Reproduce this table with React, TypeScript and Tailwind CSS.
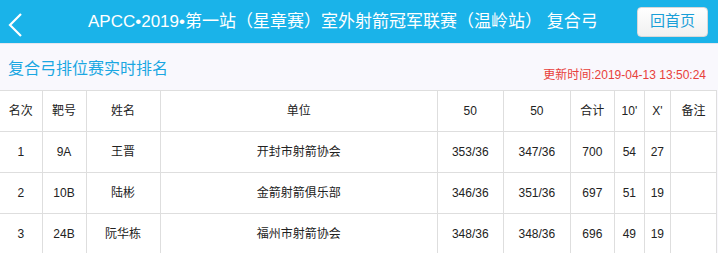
const ROWS = [
  { rank: "1", target: "9A", name: "王晋", unit: "开封市射箭协会", a: "353/36", b: "347/36", total: "700", tens: "54", xs: "27" },
  { rank: "2", target: "10B", name: "陆彬", unit: "金箭射箭俱乐部", a: "346/36", b: "351/36", total: "697", tens: "51", xs: "19" },
  { rank: "3", target: "24B", name: "阮华栋", unit: "福州市射箭协会", a: "348/36", b: "348/36", total: "696", tens: "49", xs: "19" },
];

const COLS = ["w-[42px]", "w-[44px]", "w-[74px]", "w-[277px]", "w-[66px]", "w-[67px]", "w-[44px]", "w-[30px]", "w-[26px]", "w-[46px]"];
const HEADS = ["名次", "靶号", "姓名", "单位", "50", "50", "合计", "10'", "X'", "备注"];

export default function App() {
  return (
    <div className="h-[253px] w-[718px] overflow-hidden bg-[#f9f8fd] font-['Liberation_Sans','Noto_Sans_CJK_SC',sans-serif]">
      {/* Header */}
      <div className="flex h-[44px] items-center border-b border-[#e6e6ee] bg-[#1ab3e9] pr-[10px]">
        <svg width="30" height="44" viewBox="0 0 30 44" className="shrink-0">
          <polyline points="21,14 10,25 21,36" fill="none" stroke="white" strokeWidth="2.2" />
        </svg>
        <div className="flex-1 pl-[58px] text-[17px] whitespace-nowrap text-white">
          APCC•2019•第一站（星章赛）室外射箭冠军联赛（温岭站） 复合弓
        </div>
        <button className="flex h-[30px] w-[71px] items-center justify-center rounded-[4px] border border-[#d8d8d8] bg-gradient-to-b from-white to-[#f1f1f1] text-[15px] text-[#1a9fd8]">
          回首页
        </button>
      </div>

      {/* Sub heading */}
      <div className="flex h-[46px] items-start justify-between pl-[8px] pr-[12px]">
        <span className="mt-[13px] text-[16px] text-[#1aa7e2]">复合弓排位赛实时排名</span>
        <span className="mt-[22px] text-[12px] text-[#e8403a]">更新时间:2019-04-13 13:50:24</span>
      </div>

      {/* Table */}
      <table className="w-[717px] table-fixed border-collapse bg-white text-center text-[12px] text-[#222]">
        <colgroup>
          {COLS.map((c, i) => (
            <col key={i} className={c} />
          ))}
        </colgroup>
        <thead>
          <tr className="h-[41px]">
            {HEADS.map((h, i) => (
              <th key={i} className="border border-[#dedede] border-l-0 p-0 font-normal">
                {h}
              </th>
            ))}
          </tr>
        </thead>
        <tbody>
          {ROWS.map((r) => (
            <tr key={r.rank} className="h-[41px]">
              {[r.rank, r.target, r.name, r.unit, r.a, r.b, r.total, r.tens, r.xs, ""].map((v, i) => (
                <td key={i} className="border border-[#dedede] border-l-0 p-0">
                  {v}
                </td>
              ))}
            </tr>
          ))}
        </tbody>
      </table>
    </div>
  );
}
